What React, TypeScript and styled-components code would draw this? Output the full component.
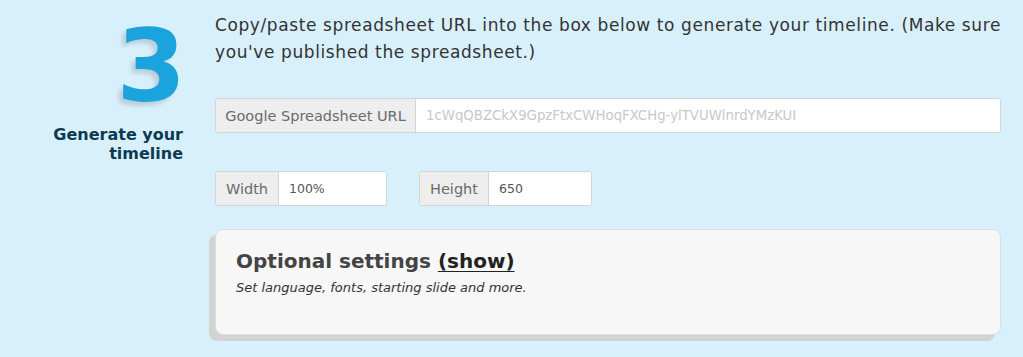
import React from 'react';
import styled, { createGlobalStyle } from 'styled-components';

const GlobalStyle = createGlobalStyle`
  html, body {
    margin: 0;
    padding: 0;
    background: #d8f0fb;
  }
  body {
    font-family: 'DejaVu Sans', 'Open Sans', sans-serif;
  }
`;

const Step = styled.div`
  display: flex;
  gap: 32px;
  width: 1023px;
  height: 357px;
  overflow: hidden;
  box-sizing: border-box;
`;

const Side = styled.div`
  width: 183px;
  flex: none;
  display: flex;
  flex-direction: column;
  align-items: flex-end;
  padding-top: 20px;
`;

const BigNumber = styled.div`
  font-family: 'DejaVu Sans', sans-serif;
  font-weight: 700;
  font-size: 100px;
  line-height: 94px;
  color: #1aa3dd;
  text-shadow: -4px 4px 4px rgba(0, 0, 0, 0.14);
  margin-right: -3px;
`;

const StepTitle = styled.h2`
  margin: 11px 0 0;
  font-size: 16px;
  line-height: 19px;
  font-weight: 700;
  color: #0b3a52;
  text-align: right;
`;

const Main = styled.div`
  flex: 1;
  padding-top: 12px;
  padding-right: 8px;
`;

const Intro = styled.p`
  margin: 0;
  font-size: 17px;
  line-height: 27px;
  letter-spacing: 0.6px;
  color: #333;
`;

const Group = styled.div<{ $width?: string }>`
  display: flex;
  width: ${p => p.$width || '100%'};
  height: 35px;
  box-sizing: border-box;
  border: 1px solid #d4d4d4;
  border-radius: 3px;
  overflow: hidden;
  background: #fff;
  box-shadow: inset 0 1px 1px rgba(0, 0, 0, 0.04);
`;

const Addon = styled.span<{ $width: number }>`
  flex: none;
  width: ${p => p.$width}px;
  box-sizing: border-box;
  display: flex;
  align-items: center;
  justify-content: center;
  background: #eeeeee;
  border-right: 1px solid #d4d4d4;
  color: #6b6b6b;
  font-size: 14.5px;
`;

const Field = styled.input`
  flex: 1;
  min-width: 0;
  border: none;
  outline: none;
  padding: 0 10px;
  font-family: inherit;
  font-size: 12.5px;
  color: #555;
  background: #fff;
  &::placeholder {
    color: #c8c8c8;
    font-size: 13.3px;
  }
`;

const UrlRow = styled.div`
  margin-top: 32px;
  margin-right: 14px;
`;

const SizeRow = styled.div`
  display: flex;
  gap: 32px;
  margin-top: 38px;
`;

const Panel = styled.div`
  margin-top: 23px;
  margin-right: 14px;
  height: 106px;
  box-sizing: border-box;
  background: #f7f7f7;
  border: 1px solid #dedede;
  border-radius: 8px;
  box-shadow: -6px 6px 0 #d3d3d3;
  padding: 17px 20px;
`;

const PanelTitle = styled.h3`
  margin: 0;
  font-size: 20px;
  line-height: 28px;
  font-weight: 700;
  color: #444;
`;

const ShowLink = styled.a`
  color: #222;
  text-decoration: underline;
  text-underline-offset: 3px;
  text-decoration-thickness: 1px;
  cursor: pointer;
`;

const PanelNote = styled.p`
  margin: 5px 0 0;
  font-size: 13px;
  font-style: italic;
  color: #333;
`;

export default function App() {
  return (
    <>
      <GlobalStyle />
      <Step>
        <Side>
          <BigNumber>3</BigNumber>
          <StepTitle>
            Generate your
            <br />
            timeline
          </StepTitle>
        </Side>
        <Main>
          <Intro>
            Copy/paste spreadsheet URL into the box below to generate your timeline. (Make sure
            you've published the spreadsheet.)
          </Intro>
          <UrlRow>
            <Group>
              <Addon $width={200}>Google Spreadsheet URL</Addon>
              <Field placeholder="1cWqQBZCkX9GpzFtxCWHoqFXCHg-ylTVUWlnrdYMzKUI" />
            </Group>
          </UrlRow>
          <SizeRow>
            <Group $width="172px">
              <Addon $width={63}>Width</Addon>
              <Field defaultValue="100%" />
            </Group>
            <Group $width="173px">
              <Addon $width={69}>Height</Addon>
              <Field defaultValue="650" />
            </Group>
          </SizeRow>
          <Panel>
            <PanelTitle>
              Optional settings <ShowLink>(show)</ShowLink>
            </PanelTitle>
            <PanelNote>Set language, fonts, starting slide and more.</PanelNote>
          </Panel>
        </Main>
      </Step>
    </>
  );
}
